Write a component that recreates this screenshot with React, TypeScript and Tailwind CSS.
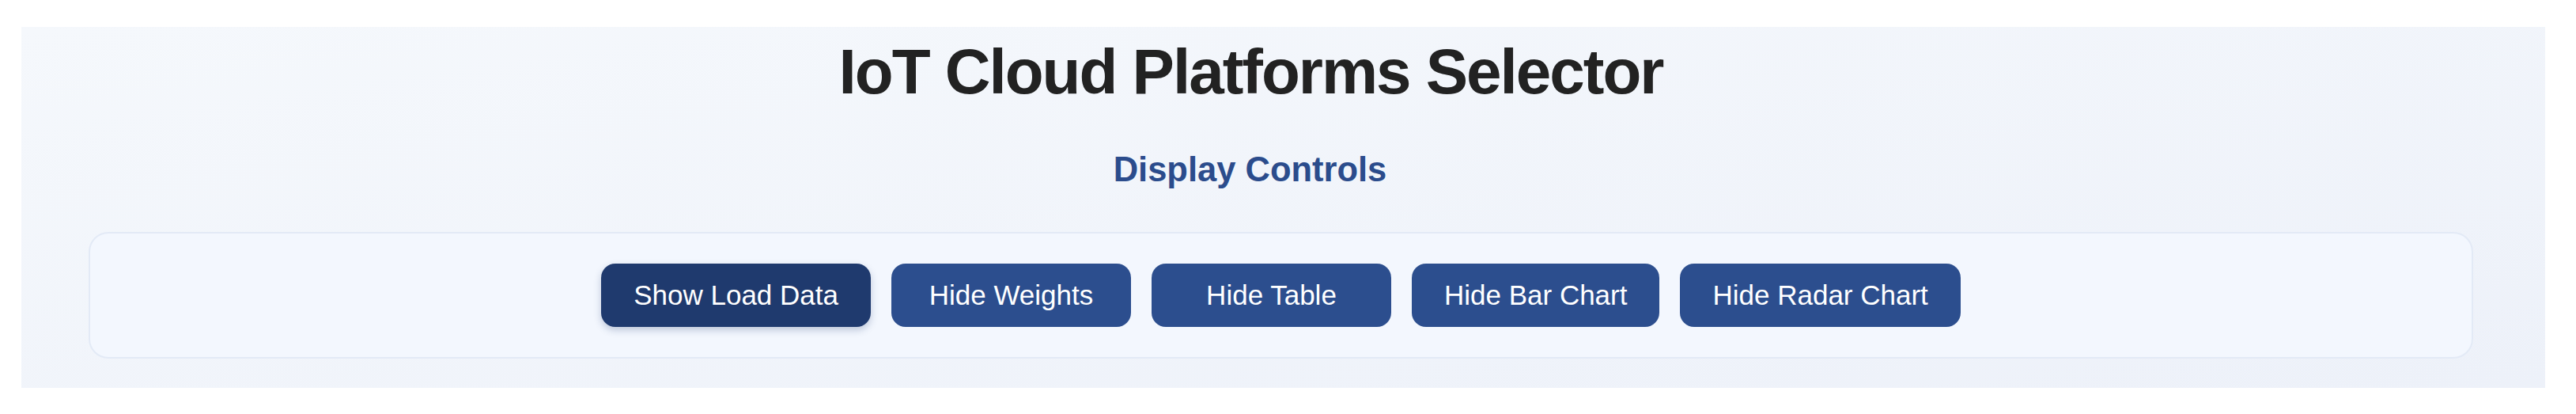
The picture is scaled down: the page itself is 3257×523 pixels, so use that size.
const CONTROLS = [
  { label: 'Show Load Data', active: true },
  { label: 'Hide Weights', active: false },
  { label: 'Hide Table', active: false },
  { label: 'Hide Bar Chart', active: false },
  { label: 'Hide Radar Chart', active: false },
];

export default function App() {
  return (
    <div
      className="h-[523px] w-[3257px] bg-white pl-[27px] pt-[34px]"
      style={{ fontFamily: '"Liberation Sans", Arial, sans-serif' }}
    >
      <div className="flex h-[456px] w-[3191px] flex-col items-center bg-gradient-to-br from-[#f5f8fc] to-[#edf1f9] pt-[17px]">
        <h1 className="mr-[82px] text-[80px] leading-[80px] font-bold tracking-[-2px] text-[#222222]">
          IoT Cloud Platforms Selector
        </h1>

        <h2 className="mt-[61px] mr-[84px] text-[43.5px] leading-[44px] font-bold text-[#2b4c8c]">
          Display Controls
        </h2>

        <div className="mt-[57px] ml-[85px] flex h-[160px] w-[3015px] items-center justify-center gap-[26px] self-start rounded-[25px] border-2 border-[#e3eaf6] bg-[#f3f7fe]">
          {CONTROLS.map((c) => (
            <button
              key={c.label}
              className={`flex h-[80px] min-w-[303px] items-center justify-center rounded-[18px] px-[41px] text-[35px] text-white ${
                c.active
                  ? 'bg-[#1f3a6e] shadow-[0_4px_10px_rgba(30,58,110,0.25)]'
                  : 'bg-[#2c4e8e]'
              }`}
            >
              {c.label}
            </button>
          ))}
        </div>
      </div>
    </div>
  );
}
